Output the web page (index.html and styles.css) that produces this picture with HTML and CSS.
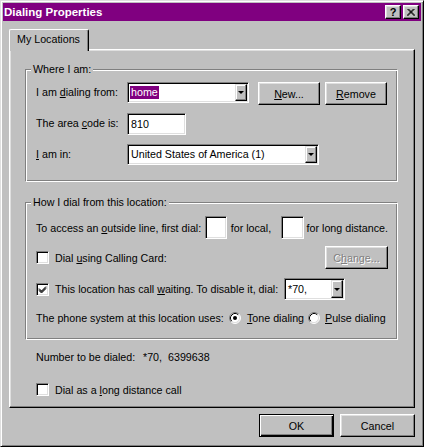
FILE: index.html
```html
<!DOCTYPE html>
<html>
<head>
<meta charset="utf-8">
<title>Dialing Properties</title>
<link rel="stylesheet" href="styles.css">
</head>
<body>
<div class="window">
  <div class="titlebar">
    <span class="title">Dialing Properties</span>
    <div class="tbtns">
      <div class="tbtn help">?</div>
      <div class="tbtn close">
        <svg width="8" height="7" viewBox="0 0 8 7"><path d="M0.5 0 L7.5 7 M1.5 0 L8 6.5 M7.5 0 L0.5 7 M6.5 0 L0 6.5" stroke="#000" stroke-width="1" fill="none"/></svg>
      </div>
    </div>
  </div>
  <div class="body">
    <div class="tabs"><div class="tab">My Locations</div></div>
    <div class="panel">
      <div class="group g1">
        <span class="legend">Where I am:</span>
        <div class="row r31">
          <span class="lbl lbl91">I am <u>d</u>ialing from:</span>
          <div class="combo c-home"><span class="val"><span class="sel">home</span></span><span class="drop"></span></div>
          <div class="btn b-new"><u>N</u>ew...</div>
          <div class="btn b-remove"><u>R</u>emove</div>
        </div>
        <div class="row r31">
          <span class="lbl lbl91">The area <u>c</u>ode is:</span>
          <div class="field f-area">810</div>
        </div>
        <div class="row r21">
          <span class="lbl lbl91"><u>I</u> am in:</span>
          <div class="combo c-country"><span class="val">United States of America (1)</span><span class="drop"></span></div>
        </div>
      </div>

      <div class="group g2">
        <span class="legend">How I dial from this location:</span>
        <div class="row rc h23">
          <span class="w172">To access an <u>o</u>utside line, first dial:</span>
          <div class="field f-local"></div>
          <span class="w55">for local,</span>
          <div class="field f-long"></div>
          <span class="pl3">for long distance.</span>
        </div>
        <div class="row rc h23 mt7">
          <span class="check"></span>
          <span class="ctext">Dial <u>u</u>sing Calling Card:</span>
          <div class="btn b-change disabled">C<u>h</u>ange...</div>
        </div>
        <div class="row rc h22 mt9">
          <span class="check on"><svg width="9" height="9" viewBox="0 0 9 9"><path d="M1 3.5 L3.5 6 L8 1.5 M1 4.5 L3.5 7 L8 2.5 M1 5.5 L3.5 8 L8 3.5" stroke="#000" stroke-width="1" fill="none"/></svg></span>
          <span class="ctext w229">This location has call <u>w</u>aiting. To disable it, dial:</span>
          <div class="combo c-star"><span class="val">*70,</span><span class="drop"></span></div>
        </div>
        <div class="row rc h21 mt7">
          <span class="w193">The phone system at this location uses:</span>
          <span class="radio"><svg width="12" height="12" viewBox="0 0 12 12"><circle cx="6" cy="6" r="5" fill="#fff"/><path d="M2.11 9.89 A5.5 5.5 0 0 1 9.89 2.11" stroke="#808080" fill="none"/><path d="M9.89 2.11 A5.5 5.5 0 0 1 2.11 9.89" stroke="#fff" fill="none"/><path d="M2.82 9.18 A4.5 4.5 0 0 1 9.18 2.82" stroke="#000" fill="none"/><path d="M9.18 2.82 A4.5 4.5 0 0 1 2.82 9.18" stroke="#dfdfdf" fill="none"/><circle cx="6" cy="6" r="2" fill="#000"/></svg></span>
          <span class="rtext w61"><u>T</u>one dialing</span>
          <span class="radio"><svg width="12" height="12" viewBox="0 0 12 12"><circle cx="6" cy="6" r="5" fill="#fff"/><path d="M2.11 9.89 A5.5 5.5 0 0 1 9.89 2.11" stroke="#808080" fill="none"/><path d="M9.89 2.11 A5.5 5.5 0 0 1 2.11 9.89" stroke="#fff" fill="none"/><path d="M2.82 9.18 A4.5 4.5 0 0 1 9.18 2.82" stroke="#000" fill="none"/><path d="M9.18 2.82 A4.5 4.5 0 0 1 2.82 9.18" stroke="#dfdfdf" fill="none"/></svg></span>
          <span class="rtext2"><u>P</u>ulse dialing</span>
        </div>
      </div>

      <div class="number">
        <span class="w107">Number to be dialed:</span><span class="w25">*70,</span><span>6399638</span>
      </div>
      <div class="row rc lastrow">
        <span class="check"></span>
        <span class="ctext">Dial as a <u>l</u>ong distance call</span>
      </div>
    </div>
    <div class="footer">
      <div class="btn b-ok default">OK</div>
      <div class="btn b-cancel">Cancel</div>
    </div>
  </div>
</div>
</body>
</html>
```

FILE: styles.css
```css
* { box-sizing: border-box; }
html, body { margin: 0; padding: 0; background: #c0c0c0; }
body {
  font-family: "Liberation Sans", Arial, sans-serif;
  font-size: 10.7px;
  color: #000;
}
u { text-decoration: underline; text-underline-offset: 1px; }

.window {
  width: 424px;
  height: 447px;
  border: 1px solid;
  border-color: #dfdfdf #000 #000 #dfdfdf;
  box-shadow: inset 1px 1px #fff, inset -1px -1px #808080;
  padding: 2px;
  background: #c0c0c0;
}

.titlebar {
  height: 18px;
  background: #800080;
  display: flex;
  align-items: center;
  justify-content: space-between;
  padding: 0 2px 0 1px;
}
.title {
  color: #fff;
  font-weight: bold;
  font-size: 11.5px;
  line-height: 18px;
}
.tbtns { display: flex; gap: 2px; }
.tbtn {
  width: 16px;
  height: 14px;
  background: #c0c0c0;
  border: 1px solid;
  border-color: #fff #000 #000 #fff;
  box-shadow: inset -1px -1px #808080, inset 1px 1px #dfdfdf;
  display: flex;
  align-items: center;
  justify-content: center;
  font-weight: bold;
  font-size: 11px;
  line-height: 11px;
}
.tbtn.help { padding-top: 1px; }

.body { padding: 8px 0 0 0; }
.tabs { display: flex; padding-left: 6px; }
.tab {
  position: relative;
  z-index: 1;
  width: 80px;
  height: 22px;
  margin-bottom: -2px;
  background: #c0c0c0;
  border-left: 1px solid #fff;
  border-top: 1px solid #fff;
  border-right: 1px solid #000;
  border-radius: 2px 2px 0 0;
  box-shadow: inset -1px 0 #808080;
  padding: 2px 0 0 7px;
  line-height: 14px;
  white-space: nowrap;
}

.panel {
  margin: 0 6px;
  height: 359px;
  border: 1px solid;
  border-color: #fff #000 #000 #fff;
  box-shadow: inset -1px -1px #808080, inset 1px 1px #dfdfdf;
}

.group {
  position: relative;
  width: 373px;
  margin-left: 15px;
  border: 1px solid;
  border-color: #808080 #fff #fff #808080;
  box-shadow: inset 1px 1px #fff, inset -1px -1px #808080;
  padding: 0 9px 0 10px;
}
.g1 { margin-top: 19px; height: 113px; padding-top: 12px; }
.g2 { margin-top: 20px; height: 138px; padding-top: 13px; }
.legend {
  position: absolute;
  top: -7px;
  left: 5px;
  padding: 0 2px;
  background: #c0c0c0;
  line-height: 13px;
  white-space: nowrap;
}

.row { display: flex; align-items: flex-start; white-space: nowrap; }
.rc { align-items: center; }
.r31 { height: 31px; }
.r21 { height: 21px; }
.h23 { height: 23px; }
.h22 { height: 22px; }
.h21 { height: 21px; }
.mt7 { margin-top: 7px; }
.mt9 { margin-top: 9px; }

.lbl { line-height: 21px; }
.lbl91 { width: 91px; }
.w172 { width: 172px; }
.w55 { width: 55px; padding-left: 4px; }
.pl3 { padding-left: 3px; }
.w229 { width: 229px; }
.w193 { width: 193px; }
.w61 { width: 61px; }
.w107 { display: inline-block; width: 107px; }
.w25 { display: inline-block; width: 25px; }

.sunken {
  border: 1px solid;
}
.field, .combo, .check {
  background: #fff;
  border: 1px solid;
  border-color: #808080 #fff #fff #808080;
  box-shadow: inset 1px 1px #000, inset -1px -1px #dfdfdf;
}
.field { padding: 0 3px; line-height: 20px; }
.f-area { width: 59px; height: 22px; }
.f-local { width: 22px; height: 23px; }
.f-long { width: 23px; height: 23px; }

.combo {
  display: flex;
  padding: 1px;
  height: 21px;
}
.combo .val {
  flex: 1;
  line-height: 17px;
  padding-left: 2px;
  overflow: hidden;
}
.c-home { width: 122px; }
.c-home .val { padding-left: 1px; }
.sel {
  display: inline-block;
  background: #800080;
  color: #fff;
  line-height: 13px;
  padding: 0 1px;
  margin-top: 1px;
}
.c-country { width: 192px; }
.c-star { width: 61px; height: 22px; }
.c-star .val { line-height: 18px; }
.drop {
  width: 12px;
  height: 100%;
  background: #c0c0c0;
  border: 1px solid;
  border-color: #dfdfdf #000 #000 #dfdfdf;
  box-shadow: inset -1px -1px #808080, inset 1px 1px #fff;
  display: flex;
  align-items: center;
  justify-content: center;
}
.drop::after {
  content: "";
  width: 0;
  height: 0;
  border-left: 3px solid transparent;
  border-right: 3px solid transparent;
  border-top: 3px solid #000;
}

.btn {
  height: 23px;
  background: #c0c0c0;
  border: 1px solid;
  border-color: #fff #000 #000 #fff;
  box-shadow: inset -1px -1px #808080, inset 1px 1px #dfdfdf;
  display: flex;
  align-items: center;
  justify-content: center;
  white-space: nowrap;
}
.b-new { width: 62px; margin-left: 9px; }
.b-remove { width: 62px; margin-left: 5px; }
.b-change { width: 63px; margin-left: auto; }
.disabled { color: #808080; text-shadow: 1px 1px 0 #fff; }

.check {
  width: 13px;
  height: 13px;
  flex: none;
  display: flex;
  align-items: center;
  justify-content: center;
}
.ctext { margin-left: 6px; }
.radio { width: 12px; height: 12px; display: flex; }
.rtext { margin-left: 6px; }
.rtext2 { margin-left: 5px; }

.number {
  margin: 10px 0 0 26px;
  line-height: 15px;
  white-space: nowrap;
}
.lastrow { height: 15px; margin: 17px 0 0 26px; }

.footer {
  display: flex;
  justify-content: flex-end;
  gap: 6px;
  padding-right: 6px;
  margin-top: 6px;
}
.b-ok, .b-cancel { width: 75px; }
.default {
  border-color: #000;
  box-shadow: inset 1px 1px #fff, inset -1px -1px #000, inset -2px -2px #808080;
}
```
